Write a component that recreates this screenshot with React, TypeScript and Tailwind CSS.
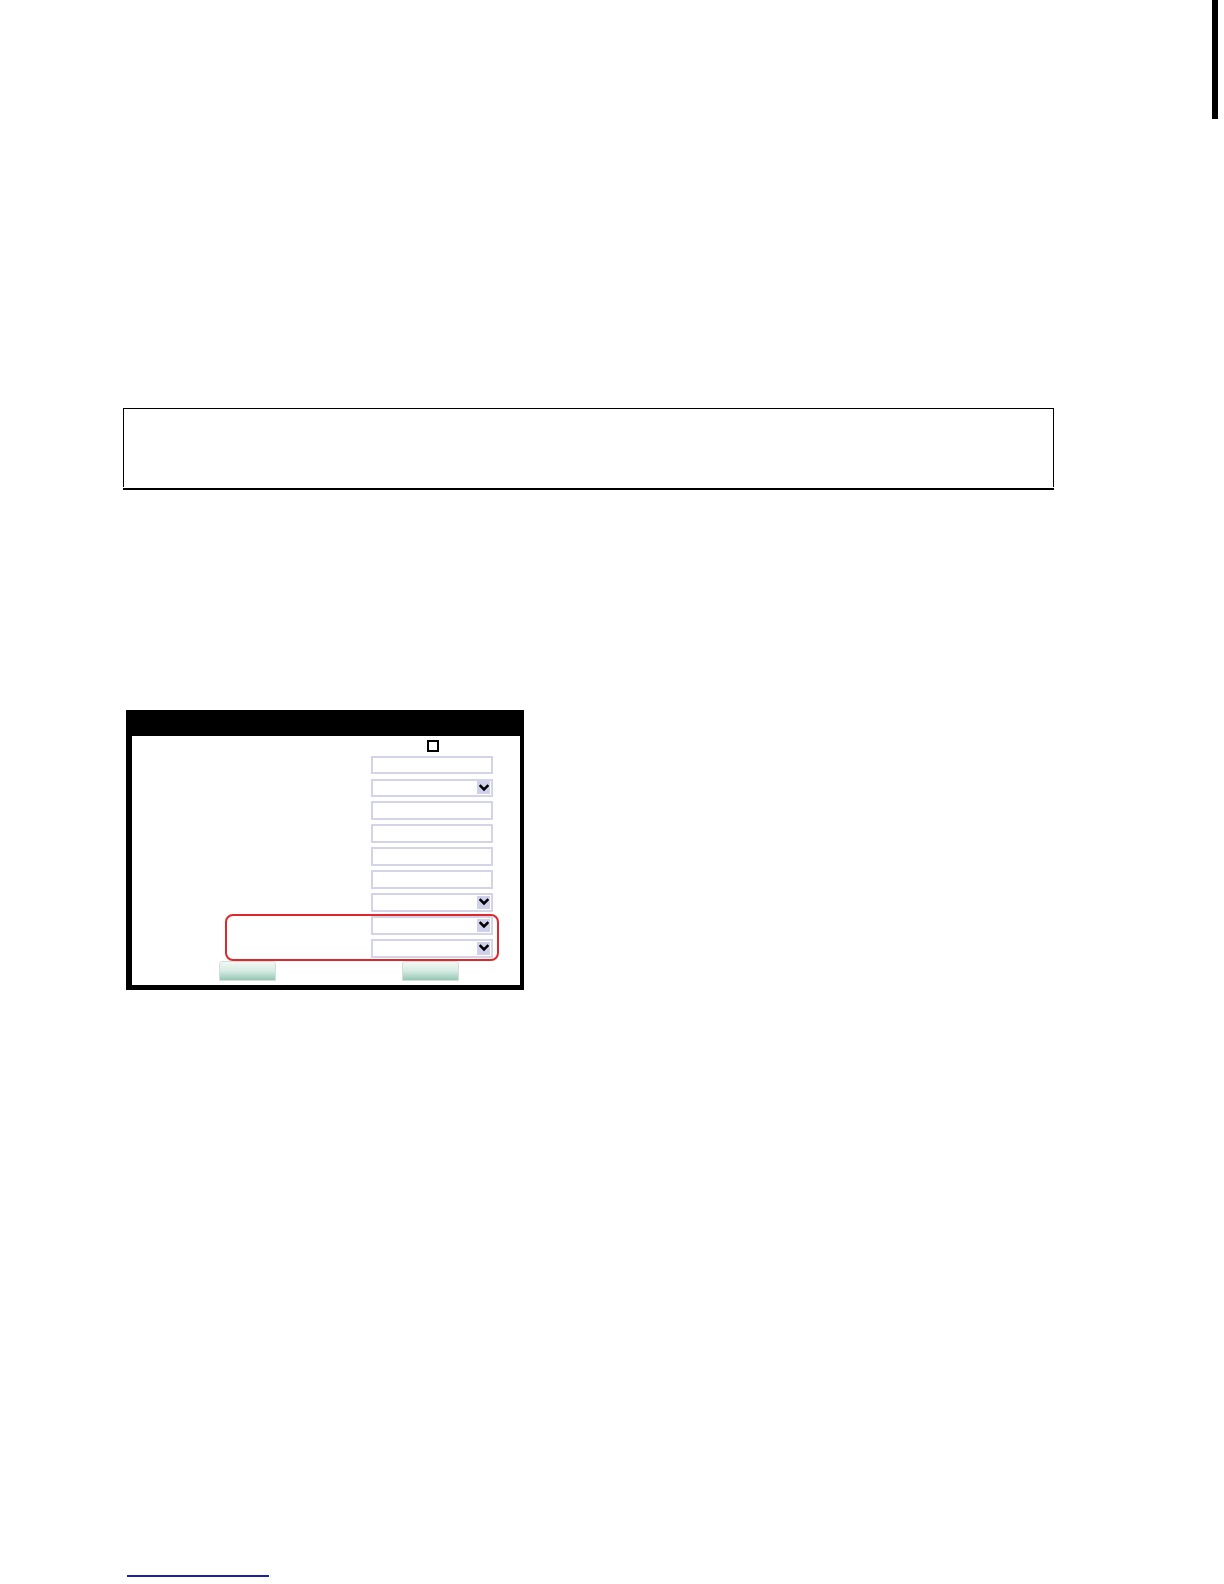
import React from "react";

function Chevron() {
  return (
    <div className="w-[13px] h-[12.5px] bg-[#cfd0ec] flex items-center justify-center">
      <svg width="10" height="8" viewBox="0 0 10 8">
        <path d="M1.5 2 L5 5.5 L8.5 2" fill="none" stroke="#000" strokeWidth="2.5" strokeLinecap="square" />
      </svg>
    </div>
  );
}

function Field({ select }: { select?: boolean }) {
  return (
    <div className="w-[122px] h-[18.4px] border-2 border-[#d3d4e8] bg-white flex items-center justify-end pr-[1px]">
      {select ? <Chevron /> : null}
    </div>
  );
}

function Btn() {
  return (
    <div className="w-[57.5px] h-[20px] rounded-t-[3px] border border-[#d2e0da] bg-gradient-to-b from-[#f2f8f5] via-[#d6ebe2] to-[#95c7b4]" />
  );
}

export default function App() {
  const top: boolean[] = [false, true, false, false, false, false, true];
  return (
    <div className="w-[1224px] h-[1584px] bg-white flex flex-col font-['Liberation_Sans',sans-serif]">
      <div className="h-[119px] w-[6px] ml-[1212px] bg-black shrink-0" />

      <div className="mt-[289px] ml-[123px] w-[931px] flex flex-col shrink-0">
        <div className="h-[79px] border-t border-x border-black" />
        <div className="mt-[1px] h-[2px] bg-black" />
      </div>

      <div className="mt-[220px] ml-[126px] w-[398px] h-[280px] bg-black flex flex-col shrink-0">
        <div className="h-[26px] shrink-0" />
        <div className="flex-1 ml-[6px] mr-[4px] mb-[5px] bg-white flex flex-col">
          <div className="mt-[3.5px] ml-[294.5px] w-[12px] h-[12px] border-2 border-black" />
          <div className="mt-[4.1px] ml-[239px] flex flex-col gap-[4.55px]">
            {top.map((s, i) => (
              <Field key={i} select={s} />
            ))}
          </div>
          <div className="mt-[2px] ml-[92.5px] w-[274.6px] h-[46.9px] border-2 border-[#e0282c] rounded-[8px] pl-[144.5px] pt-[0.7px] flex flex-col gap-[4.55px]">
            <Field select />
            <Field select />
          </div>
          <div className="ml-[86.8px] flex gap-[125.3px]">
            <Btn />
            <Btn />
          </div>
        </div>
      </div>

      <div className="mt-[585px] ml-[127px] w-[142px] h-[1.5px] bg-[#1f1fa6] shrink-0" />
    </div>
  );
}
